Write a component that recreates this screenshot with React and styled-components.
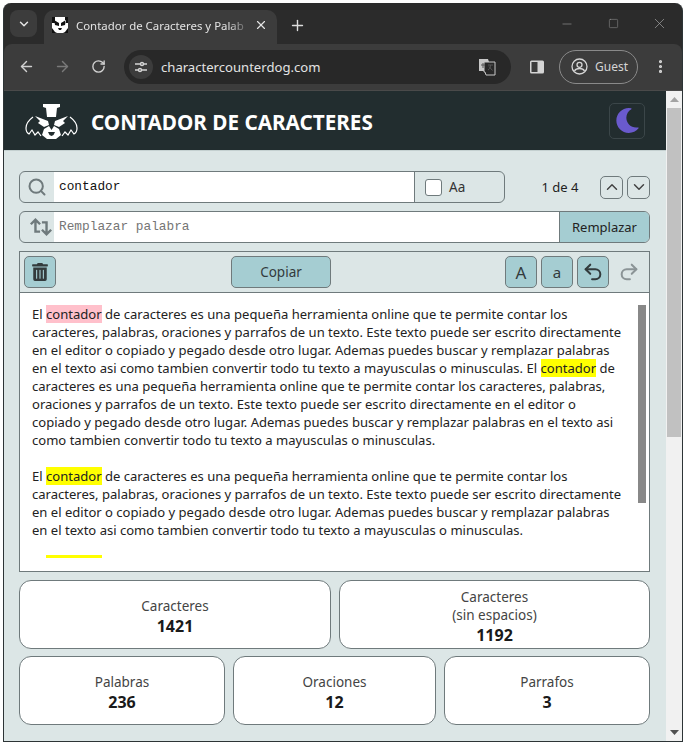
import React from "react";
import styled, { createGlobalStyle } from "styled-components";
import {
  ArrowLeft,
  ArrowRight,
  ChevronDown,
  ChevronUp,
  EllipsisVertical,
  Minus,
  Plus,
  Redo2,
  RotateCw,
  Search,
  Square,
  Undo2,
  X,
} from "lucide-react";
import { FaMoon, FaTrashAlt } from "react-icons/fa";

const UI_FONT = `"Noto Sans", "Open Sans", sans-serif`;

const GlobalStyle = createGlobalStyle`
  html, body {
    margin: 0;
    padding: 0;
    background: #ffffff;
    overflow: hidden;
  }
  * {
    box-sizing: border-box;
  }
`;

const Window = styled.div`
  width: 680px;
  height: 739px;
  margin: 3px;
  display: flex;
  flex-direction: column;
  background: #2b2b2b;
  border: 1px solid #2d3436;
  border-top: none;
  border-radius: 8px 8px 0 0;
  overflow: hidden;
  font-family: ${UI_FONT};
`;

const TabStrip = styled.div`
  height: 41px;
  display: flex;
  align-items: flex-end;
  padding-left: 6px;
  color: #c7c7c7;
`;

const TabMenu = styled.div`
  width: 27px;
  height: 27px;
  margin-bottom: 7px;
  border-radius: 8px;
  background: #3c3c3c;
  display: flex;
  align-items: center;
  justify-content: center;
  color: #e3e3e3;
`;

const Tab = styled.div`
  width: 233px;
  height: 34px;
  margin-left: 7px;
  padding: 0 9px 4px 8px;
  display: flex;
  align-items: center;
  background: #3c3c3c;
  border-radius: 10px 10px 0 0;
  color: #e3e3e3;
`;

const TabTitle = styled.span`
  flex: 1;
  min-width: 0;
  margin: 0 9px 0 8px;
  font-size: 11.4px;
  white-space: nowrap;
  mask-image: linear-gradient(90deg, #000 90%, rgba(0, 0, 0, 0.25) 100%);
`;

const NewTab = styled.div`
  width: 40px;
  height: 34px;
  padding-bottom: 4px;
  display: flex;
  align-items: center;
  justify-content: center;
  color: #dddddd;
`;

const WindowControls = styled.div`
  margin-left: auto;
  height: 100%;
  display: flex;
  align-items: center;
  color: #a3a3a3;
`;

const WindowControl = styled.div`
  width: 46px;
  height: 40px;
  display: flex;
  align-items: center;
  justify-content: center;
`;

const Toolbar = styled.div`
  height: 47px;
  display: flex;
  align-items: center;
  padding: 0 0 1px 4px;
  background: #3c3c3c;
  border-radius: 8px 8px 0 0;
  border-bottom: 1px solid #4a4a4a;
  color: #c7c7c7;
`;

const NavButton = styled.div`
  width: 36px;
  height: 34px;
  display: flex;
  align-items: center;
  justify-content: center;
  color: ${(p) => (p.$dim ? "#7a7a7a" : "#d0d0d0")};
`;

const Omnibox = styled.div`
  width: 387px;
  height: 34px;
  margin-left: 8px;
  padding: 0 15px 0 5px;
  display: flex;
  align-items: center;
  background: #282828;
  border-radius: 17px;
`;

const SiteChip = styled.div`
  width: 24px;
  height: 24px;
  border-radius: 50%;
  background: #3c3c3c;
  display: flex;
  align-items: center;
  justify-content: center;
`;

const Url = styled.span`
  flex: 1;
  margin-left: 8px;
  font-size: 13.1px;
  color: #e3e3e3;
`;

const SidePanel = styled.div`
  width: 48px;
  padding-left: 4px;
  display: flex;
  justify-content: center;
`;

const GuestPill = styled.div`
  width: 79px;
  height: 34px;
  border: 1px solid #8a8a8a;
  border-radius: 17px;
  display: flex;
  align-items: center;
  gap: 7px;
  padding-left: 11px;
  font-size: 12px;
  color: #d5d5d5;
`;

const Kebab = styled.div`
  width: 44px;
  display: flex;
  justify-content: center;
  color: #d5d5d5;
`;

const Viewport = styled.div`
  flex: 1;
  min-height: 0;
  display: flex;
`;

const Page = styled.div`
  flex: 1;
  min-width: 0;
  display: flex;
  flex-direction: column;
  background: #dce6e6;
`;

const Header = styled.header`
  height: 60px;
  padding: 0 21px 0 20px;
  display: flex;
  align-items: center;
  background: #222d2f;
  border-bottom: 1px solid #c4d0d0;
`;

const LogoMark = styled.svg`
  margin-top: 2px;
  flex-shrink: 0;
`;

const Brand = styled.h1`
  margin: 3px 0 0 13px;
  font-family: ${UI_FONT};
  font-size: 20.7px;
  font-weight: 700;
  color: #ffffff;
  white-space: nowrap;
`;

const ThemeButton = styled.div`
  width: 36px;
  height: 36px;
  margin-left: auto;
  border: 1px solid #3b4649;
  border-radius: 5px;
  display: flex;
  align-items: center;
  justify-content: center;
  color: #6a5acd;
`;

const Content = styled.main`
  padding: 20px 16px 0 15px;
  display: flex;
  flex-direction: column;
`;

const SearchRow = styled.div`
  height: 32px;
  display: flex;
  align-items: center;
`;

const InputGroup = styled.div`
  height: 32px;
  width: ${(p) => p.$width};
  display: flex;
  border: 1px solid #6f7a7c;
  border-radius: 6px;
  overflow: hidden;
  flex-shrink: 0;
`;

const GroupIcon = styled.div`
  width: 34px;
  padding-left: ${(p) => p.$pad || "0"};
  display: flex;
  align-items: center;
  justify-content: center;
  color: #6f7a7c;
  flex-shrink: 0;
`;

const FieldText = styled.div`
  flex: 1;
  display: flex;
  align-items: center;
  padding: 0 0 2px 5px;
  background: #ffffff;
  font-family: "Liberation Mono", monospace;
  font-size: 12.8px;
  color: ${(p) => (p.$placeholder ? "#757575" : "#111111")};
`;

const CaseToggle = styled.div`
  width: 90px;
  display: flex;
  align-items: center;
  gap: 7px;
  padding-left: 10px;
  border-left: 1px solid #6f7a7c;
  font-size: 13.5px;
  color: #333333;
`;

const CheckBox = styled.div`
  width: 17px;
  height: 17px;
  border: 1px solid #6f7a7c;
  border-radius: 3px;
  background: #ffffff;
`;

const MatchCount = styled.div`
  width: 95px;
  padding-left: 15px;
  text-align: center;
  font-size: 13px;
  color: #222222;
`;

const ArrowButton = styled.div`
  width: 23px;
  height: 23px;
  border: 1px solid #6f7a7c;
  border-radius: 5px;
  display: flex;
  align-items: center;
  justify-content: center;
  color: #444444;
  margin-left: ${(p) => p.$gap || "0"};
`;

const ReplaceRow = styled.div`
  margin-top: 8px;
`;

const ReplaceButton = styled.div`
  width: 90px;
  display: flex;
  align-items: center;
  justify-content: center;
  background: #a5cdd2;
  border-left: 1px solid #6f7a7c;
  font-size: 13px;
  color: #222222;
`;

const Editor = styled.section`
  margin-top: 8px;
  height: 321px;
  border: 1px solid #6f7a7c;
  display: flex;
  flex-direction: column;
`;

const EditorBar = styled.div`
  height: 41px;
  padding: 4px;
  display: flex;
  align-items: flex-start;
  border-bottom: 1px solid #6f7a7c;
`;

const ToolButton = styled.div`
  width: ${(p) => p.$width || "32px"};
  height: 32px;
  margin-left: ${(p) => p.$gap || "0"};
  border: 1px solid ${(p) => (p.$ghost ? "transparent" : "#6f7a7c")};
  border-radius: 5px;
  display: flex;
  align-items: center;
  justify-content: center;
  background: ${(p) => (p.$ghost ? "transparent" : "#a5cdd2")};
  color: ${(p) => (p.$ghost ? "#8b9496" : "#333b3d")};
  font-size: ${(p) => p.$size || "13px"};
  flex-shrink: 0;
`;

const TextArea = styled.div`
  position: relative;
  flex: 1;
  min-height: 0;
  padding: 12px 12px 0;
  background: #ffffff;
  overflow: hidden;
`;

const TextLine = styled.div`
  height: 18px;
  line-height: 18px;
  font-size: 13.05px;
  color: #222222;
  white-space: nowrap;
`;

const Mark = styled.span`
  background: ${(p) => (p.$current ? "#ffc0cb" : "#ffff00")};
`;

const GhostMark = styled.div`
  width: 56px;
  height: 3px;
  margin: 16px 0 0 14px;
  background: #ffff00;
`;

const InnerThumb = styled.div`
  position: absolute;
  top: 12px;
  right: 3px;
  width: 8px;
  height: 198px;
  background: #888888;
`;

const StatsRow = styled.div`
  margin-top: ${(p) => p.$gap};
  display: grid;
  grid-template-columns: ${(p) => p.$columns};
  column-gap: 8px;
`;

const StatCard = styled.div`
  height: 69px;
  padding-top: 4px;
  display: flex;
  flex-direction: column;
  align-items: center;
  justify-content: center;
  background: #ffffff;
  border: 1px solid #6f7a7c;
  border-radius: 12px;
`;

const StatLabel = styled.div`
  font-size: 13.5px;
  line-height: 18px;
  color: #444444;
  text-align: center;
`;

const StatValue = styled.div`
  font-size: 16px;
  line-height: 22px;
  font-weight: 700;
  color: #1a1a1a;
`;

const PageScrollbar = styled.div`
  width: 16px;
  display: flex;
  flex-direction: column;
  align-items: center;
  background: #f1f1f1;
`;

const ScrollArrow = styled.div`
  height: 17px;
  display: flex;
  align-items: center;
  justify-content: center;
  margin-top: ${(p) => (p.$push ? "auto" : "0")};
`;

const ScrollThumb = styled.div`
  width: 14px;
  height: 329px;
  background: #c1c1c1;
`;

const EDITOR_LINES = [
  ["El ", "current", " de caracteres es una pequeña herramienta online que te permite contar los"],
  ["caracteres, palabras, oraciones y parrafos de un texto. Este texto puede ser escrito directamente"],
  ["en el editor o copiado y pegado desde otro lugar. Ademas puedes buscar y remplazar palabras"],
  ["en el texto asi como tambien convertir todo tu texto a mayusculas o minusculas. El ", "match", " de"],
  ["caracteres es una pequeña herramienta online que te permite contar los caracteres, palabras,"],
  ["oraciones y parrafos de un texto. Este texto puede ser escrito directamente en el editor o"],
  ["copiado y pegado desde otro lugar. Ademas puedes buscar y remplazar palabras en el texto asi"],
  ["como tambien convertir todo tu texto a mayusculas o minusculas."],
  [""],
  ["El ", "match", " de caracteres es una pequeña herramienta online que te permite contar los"],
  ["caracteres, palabras, oraciones y parrafos de un texto. Este texto puede ser escrito directamente"],
  ["en el editor o copiado y pegado desde otro lugar. Ademas puedes buscar y remplazar palabras"],
  ["en el texto asi como tambien convertir todo tu texto a mayusculas o minusculas."],
];

function DogLogo() {
  return (
    <LogoMark width="54" height="38" viewBox="0 0 54 38" fill="none">
      <path d="M19 1h17v3l-3 1-1 9h-9l-1-9-3-1z" fill="#fff" />
      <path d="M11 13l13 5 1 4-5 2-6-4 2-2zM44 13l-13 5-1 4 5 2 6-4-2-2z" fill="#fff" />
      <path d="M20 26l5-3 2.500 4 2.500-4 5 3 2 6-5 4H23l-5-4z" fill="#fff" />
      <path d="M24 29h7l-1.500 3-2 1-2-1z" fill="#222d2f" />
      <path d="M9 14C5 17 2 20 2 25c0 3 1 5 3 6l3-4 3 5 3-3 3 4M46 14c4 3 7 6 7 11 0 3-1 5-3 6l-3-4-3 5-3-3-3 4" stroke="#fff" strokeWidth="1.2" />
    </LogoMark>
  );
}

function Favicon() {
  return (
    <svg width="16" height="16" viewBox="0 0 16 16">
      <rect width="16" height="16" fill="#fff" />
      <path d="M0 0h3v6H0zM13 0h3v6h-3zM2 3l5 3v3L3 8zM14 3L9 6v3l4-1zM0 11l3 4 2 1H0zM16 11l-3 4-2 1h5zM6 11h4l-1 2H7z" fill="#111" />
    </svg>
  );
}

function TuneIcon() {
  return (
    <svg width="14" height="14" viewBox="0 0 14 14" fill="none" stroke="#d5d5d5" strokeWidth="1.4">
      <path d="M1 4h5M10 4h3M1 10h3M8 10h5" />
      <circle cx="8" cy="4" r="1.500" />
      <circle cx="6" cy="10" r="1.500" />
    </svg>
  );
}

function TranslateIcon() {
  return (
    <svg width="18" height="18" viewBox="0 0 18 18">
      <path d="M1 1h9l1 3v9H1z" fill="#c7c7c7" />
      <path d="M6 4h11v13H8l-1-3H6z" fill="#282828" stroke="#c7c7c7" strokeWidth="1" />
      <path d="M3 7h4M5 5v5M10 7h5M12.500 7c0 3-1 4-2.500 5M11 8.500l3.500 4" stroke="#555" strokeWidth="1" fill="none" />
    </svg>
  );
}

function SidePanelIcon() {
  return (
    <svg width="16" height="16" viewBox="0 0 16 16">
      <rect x="1" y="1.500" width="14" height="13" rx="1.500" fill="#d5d5d5" />
      <rect x="2.500" y="3" width="6" height="10" fill="#3c3c3c" />
    </svg>
  );
}

function GuestIcon() {
  return (
    <svg width="17" height="17" viewBox="0 0 17 17" fill="none" stroke="#d5d5d5" strokeWidth="1.300">
      <circle cx="8.500" cy="8.500" r="7.500" />
      <circle cx="8.500" cy="6.800" r="2.500" />
      <path d="M3.500 13c1-2 3-2.500 5-2.500s4 .5 5 2.500" />
    </svg>
  );
}

function SwapIcon() {
  return (
    <svg width="24" height="20" viewBox="0 0 26 20" fill="none" stroke="#6f7a7c" strokeWidth="2.600">
      <path d="M2 7l5-5 5 5M7 2v13h5M24 13l-5 5-5-5M19 18V5h-5" />
    </svg>
  );
}

function ScrollTriangle({ down }) {
  return (
    <svg width="9" height="5" viewBox="0 0 9 5">
      <path d={down ? "M0 0h9L4.500 5z" : "M0 5h9L4.500 0z"} fill={down ? "#505050" : "#a3a3a3"} />
    </svg>
  );
}

function TextRows({ rows }) {
  return rows.map((parts, i) => (
    <TextLine key={i}>
      {parts.map((part, j) =>
        part === "current" || part === "match" ? (
          <Mark key={j} $current={part === "current"}>
            contador
          </Mark>
        ) : (
          <span key={j}>{part}</span>
        )
      )}
    </TextLine>
  ));
}

export default function App() {
  return (
    <>
      <GlobalStyle />
      <Window>
        <TabStrip>
          <TabMenu>
            <ChevronDown size={14} strokeWidth={2.5} />
          </TabMenu>
          <Tab>
            <Favicon />
            <TabTitle>Contador de Caracteres y Palab</TabTitle>
            <X size={14} strokeWidth={2} />
          </Tab>
          <NewTab>
            <Plus size={17} strokeWidth={2} />
          </NewTab>
          <WindowControls>
            <WindowControl>
              <Minus size={14} strokeWidth={1} />
            </WindowControl>
            <WindowControl>
              <Square size={11} strokeWidth={1} />
            </WindowControl>
            <WindowControl>
              <X size={17} strokeWidth={1} />
            </WindowControl>
          </WindowControls>
        </TabStrip>
        <Toolbar>
          <NavButton>
            <ArrowLeft size={17} />
          </NavButton>
          <NavButton $dim>
            <ArrowRight size={17} />
          </NavButton>
          <NavButton>
            <RotateCw size={15} strokeWidth={2.2} />
          </NavButton>
          <Omnibox>
            <SiteChip>
              <TuneIcon />
            </SiteChip>
            <Url>charactercounterdog.com</Url>
            <TranslateIcon />
          </Omnibox>
          <SidePanel>
            <SidePanelIcon />
          </SidePanel>
          <GuestPill>
            <GuestIcon />
            Guest
          </GuestPill>
          <Kebab>
            <EllipsisVertical size={17} strokeWidth={2.5} />
          </Kebab>
        </Toolbar>
        <Viewport>
          <Page>
            <Header>
              <DogLogo />
              <Brand>CONTADOR DE CARACTERES</Brand>
              <ThemeButton>
                <FaMoon size={25} />
              </ThemeButton>
            </Header>
            <Content>
              <SearchRow>
                <InputGroup $width="486px">
                  <GroupIcon>
                    <Search size={20} strokeWidth={2.4} />
                  </GroupIcon>
                  <FieldText>contador</FieldText>
                  <CaseToggle>
                    <CheckBox />
                    Aa
                  </CaseToggle>
                </InputGroup>
                <MatchCount>1 de 4</MatchCount>
                <ArrowButton>
                  <ChevronUp size={18} />
                </ArrowButton>
                <ArrowButton $gap="4px">
                  <ChevronDown size={18} />
                </ArrowButton>
              </SearchRow>
              <ReplaceRow>
                <InputGroup $width="631px">
                  <GroupIcon $pad="8px">
                    <SwapIcon />
                  </GroupIcon>
                  <FieldText $placeholder>Remplazar palabra</FieldText>
                  <ReplaceButton>Remplazar</ReplaceButton>
                </InputGroup>
              </ReplaceRow>
              <Editor>
                <EditorBar>
                  <ToolButton>
                    <FaTrashAlt size={18} />
                  </ToolButton>
                  <ToolButton $width="100px" $gap="175px" $size="13.5px">
                    Copiar
                  </ToolButton>
                  <ToolButton $gap="174px" $size="17px">
                    A
                  </ToolButton>
                  <ToolButton $gap="4px" $size="15px">
                    a
                  </ToolButton>
                  <ToolButton $gap="4px">
                    <Undo2 size={22} strokeWidth={2.2} />
                  </ToolButton>
                  <ToolButton $gap="4px" $ghost>
                    <Redo2 size={22} strokeWidth={2.2} />
                  </ToolButton>
                </EditorBar>
                <TextArea>
                  <TextRows rows={EDITOR_LINES} />
                  <GhostMark />
                  <InnerThumb />
                </TextArea>
              </Editor>
              <StatsRow $gap="8px" $columns="312px 311px">
                <StatCard>
                  <StatLabel>Caracteres</StatLabel>
                  <StatValue>1421</StatValue>
                </StatCard>
                <StatCard>
                  <StatLabel>
                    Caracteres
                    <br />
                    (sin espacios)
                  </StatLabel>
                  <StatValue>1192</StatValue>
                </StatCard>
              </StatsRow>
              <StatsRow $gap="7px" $columns="206px 203px 206px">
                <StatCard>
                  <StatLabel>Palabras</StatLabel>
                  <StatValue>236</StatValue>
                </StatCard>
                <StatCard>
                  <StatLabel>Oraciones</StatLabel>
                  <StatValue>12</StatValue>
                </StatCard>
                <StatCard>
                  <StatLabel>Parrafos</StatLabel>
                  <StatValue>3</StatValue>
                </StatCard>
              </StatsRow>
            </Content>
          </Page>
          <PageScrollbar>
            <ScrollArrow>
              <ScrollTriangle />
            </ScrollArrow>
            <ScrollThumb />
            <ScrollArrow $push>
              <ScrollTriangle down />
            </ScrollArrow>
          </PageScrollbar>
        </Viewport>
      </Window>
    </>
  );
}
